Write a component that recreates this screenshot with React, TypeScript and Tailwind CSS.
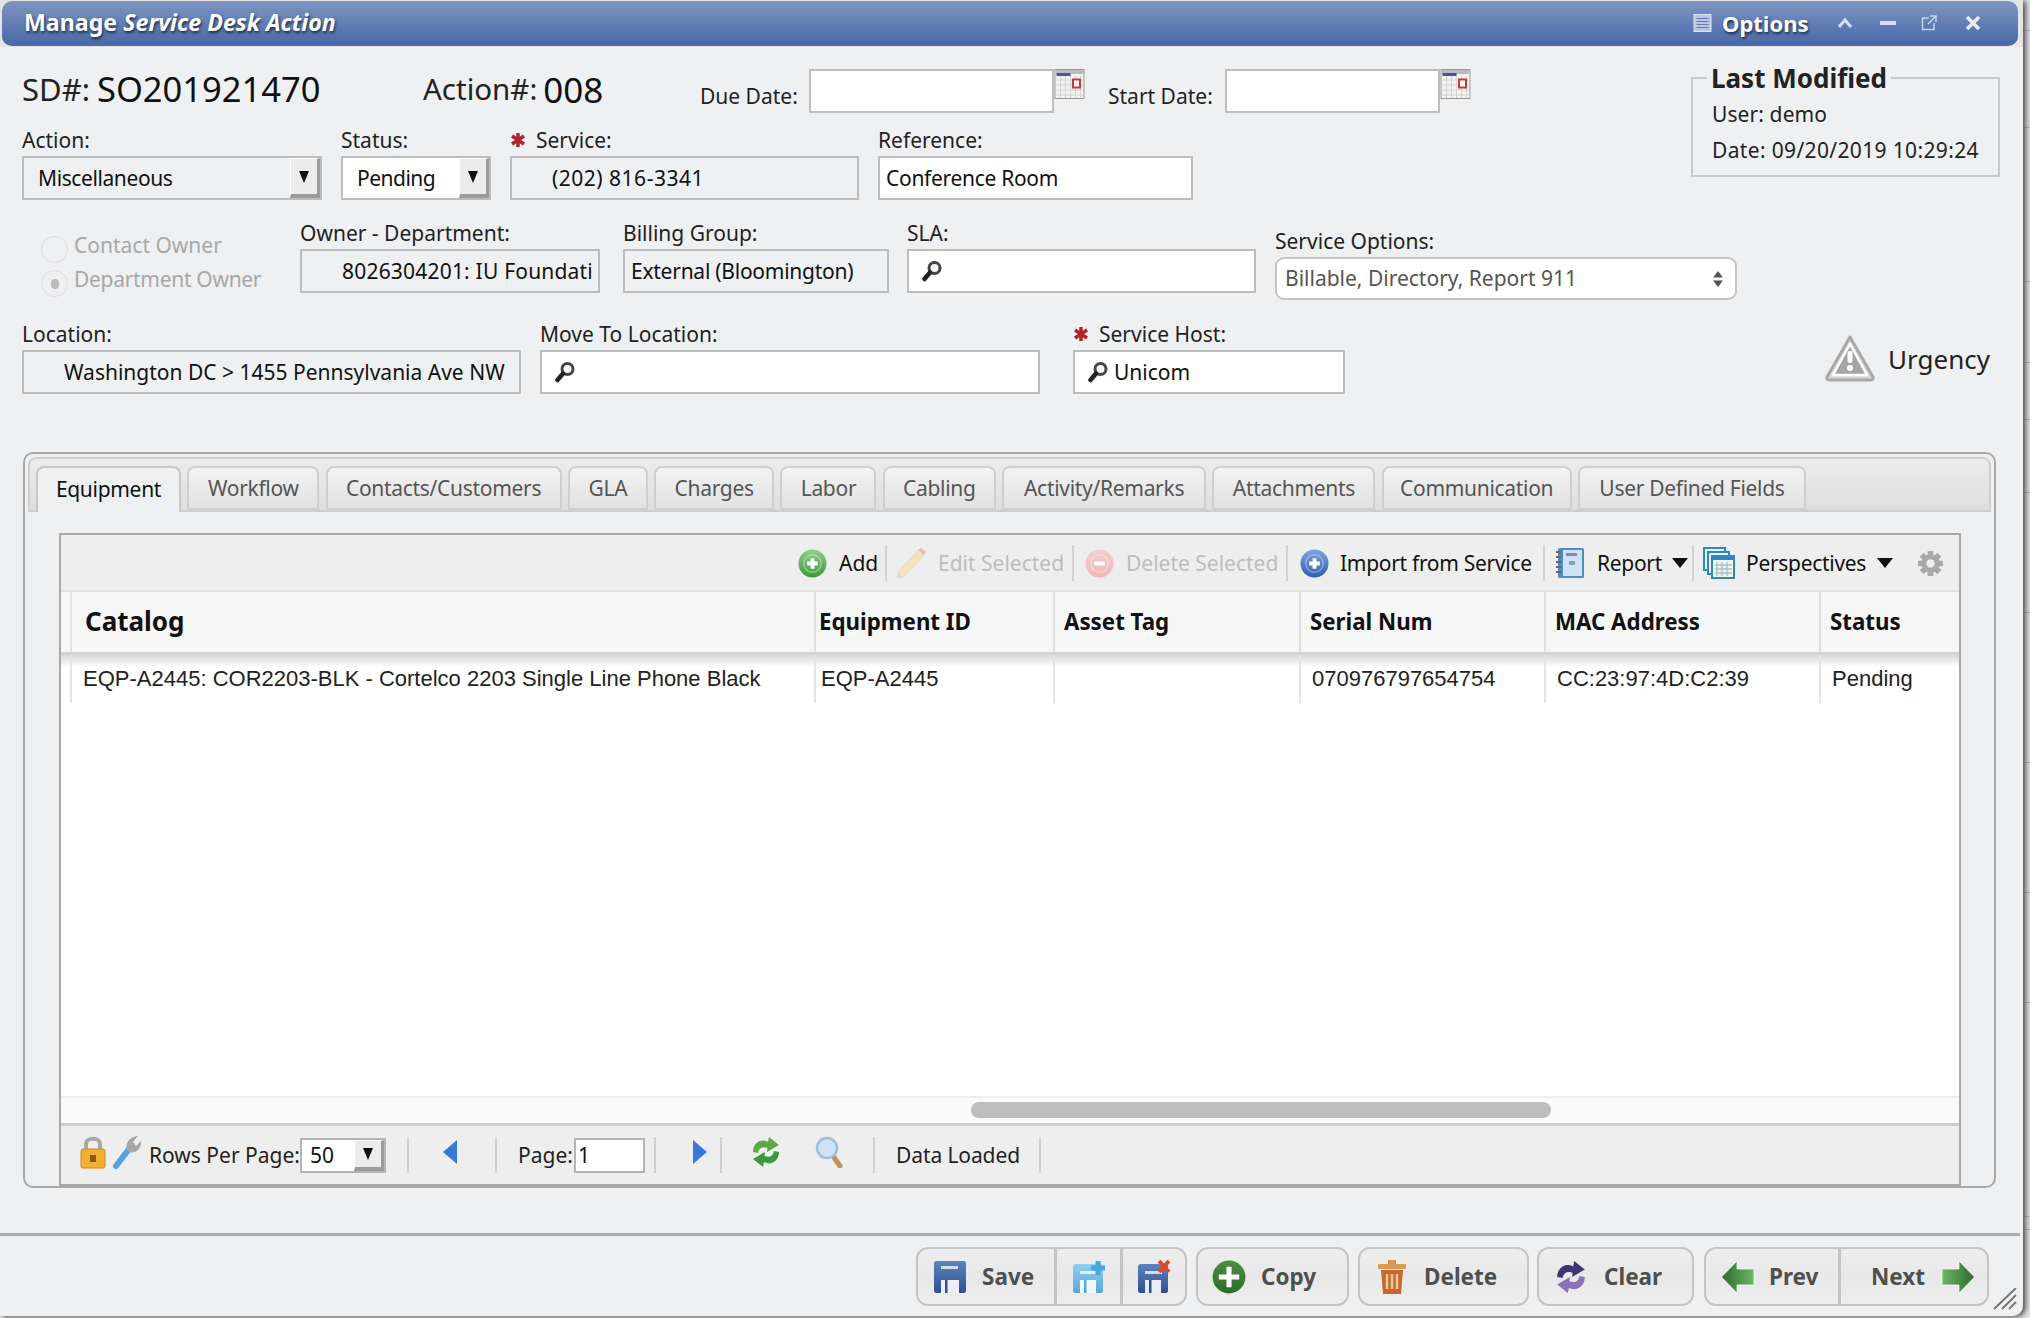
import React from "react";

const Tri = ({ className = "" }: { className?: string }) => (
  <svg viewBox="0 0 16 10" className={className}><path d="M0 0H16L8 10Z" fill="#111" /></svg>
);

const Mag = () => (
  <svg viewBox="0 0 22 22" className="w-[22px] h-[22px] shrink-0">
    <circle cx="13.5" cy="8" r="5.5" fill="#f4f4f4" stroke="#444" strokeWidth="3" />
    <path d="M9 12.5L3.5 19" stroke="#222" strokeWidth="4.5" strokeLinecap="round" />
  </svg>
);

const Cal = () => (
  <svg viewBox="0 0 30 30" className="w-[31px] h-[30px] shrink-0">
    <rect x="0.5" y="0.5" width="29" height="29" fill="#f2f2f2" stroke="#999" />
    <rect x="1" y="1" width="28" height="4" fill="#bbb" />
    <rect x="2" y="4" width="14" height="3" fill="#4a4fb0" />
    <path d="M1 11H29M1 16H29M1 21H29M1 26H29M6 7V29M11 7V29M16 7V29M21 7V29M26 7V29" stroke="#d4d4d4" strokeWidth="1" />
    <rect x="18.5" y="10.5" width="7" height="8" fill="#fff" stroke="#c63a3a" strokeWidth="2" />
  </svg>
);

const Star = () => (
  <svg viewBox="0 0 16 16" className="w-[16px] h-[16px] shrink-0">
    <path d="M8 1V15M2 4L14 12M14 4L2 12" stroke="#b3222a" strokeWidth="3.4" />
  </svg>
);

const Round = ({ id, from, to, sign, size = 29, opacity = 1, ring = true }: { id: string; from: string; to: string; sign: "plus" | "minus"; size?: number; opacity?: number; ring?: boolean }) => (
  <svg viewBox="0 0 30 30" className="shrink-0" style={{ width: size, height: size, opacity }}>
    <defs>
      <linearGradient id={id} x1="0" y1="0" x2="0" y2="1">
        <stop offset="0" stopColor={from} />
        <stop offset="1" stopColor={to} />
      </linearGradient>
    </defs>
    <circle cx="15" cy="15" r="14.5" fill={`url(#${id})`} />
    {ring && <circle cx="15" cy="15" r="9" fill="none" stroke="#fff" strokeOpacity="0.35" strokeWidth="1.5" />}
    {sign === "plus" ? (
      ring ? <path d="M15 9.5V20.5M9.5 15H20.5" stroke="#fff" strokeWidth="4" /> : <path d="M15 6V24M6 15H24" stroke="#fff" strokeWidth="4.5" />
    ) : (
      <path d="M9.5 15H20.5" stroke="#fff" strokeWidth="4" />
    )}
  </svg>
);

const Pencil = () => (
  <svg viewBox="0 0 30 32" className="w-[30px] h-[32px] shrink-0">
    <path d="M2 25L22 3L28 8L8 30L1 31Z" fill="#f3e2bd" stroke="#e8dcc4" />
    <path d="M22 3L25 0.5L30 5L28 8Z" fill="#eeb9c4" />
    <path d="M1 31L2 25L8 30Z" fill="#ddd" />
  </svg>
);

const Notebook = () => (
  <svg viewBox="0 0 30 32" className="w-[30px] h-[32px] shrink-0">
    <rect x="3" y="1" width="26" height="30" rx="1.5" fill="#4f8cc0" />
    <rect x="8" y="3" width="19" height="26" fill="#cfe3f4" />
    <rect x="11" y="6" width="11" height="3" fill="#6d93bc" />
    <rect x="14" y="14" width="6" height="4" fill="#8aa0b6" />
    <path d="M1 5H6M1 10H6M1 15H6M1 20H6M1 25H6" stroke="#666" strokeWidth="2" />
  </svg>
);

const Stack = () => (
  <svg viewBox="0 0 32 32" className="w-[32px] h-[32px] shrink-0">
    <rect x="1" y="1" width="21" height="22" fill="#e8f3fb" stroke="#2f86bd" strokeWidth="2" />
    <rect x="5" y="5" width="21" height="22" fill="#e8f3fb" stroke="#2f86bd" strokeWidth="2" />
    <rect x="9" y="9" width="22" height="22" fill="#f6f3e3" stroke="#2f86bd" strokeWidth="2" />
    <rect x="9" y="9" width="22" height="4" fill="#2f86bd" />
    <path d="M14 15V29M19 15V29M24 15V29M12 18H29M12 22H29M12 26H29" stroke="#9fc2dc" strokeWidth="1.3" />
  </svg>
);

const Gear = () => (
  <svg viewBox="0 0 26 26" className="w-[27px] h-[27px] shrink-0">
    <path d="M13 1V25M1 13H25M4.500 4.500L21.500 21.500M21.500 4.500L4.500 21.500" stroke="#a9a9a9" strokeWidth="5.5" />
    <circle cx="13" cy="13" r="9" fill="#a9a9a9" />
    <circle cx="13" cy="13" r="4" fill="#eee" />
  </svg>
);

const Sep = () => <div className="w-[2px] h-[36px] bg-[#d2d2d2] shrink-0" />;
const FootSep = () => <div className="w-[2px] h-[36px] bg-[#d0d0d0] shrink-0" />;

const Floppy = ({ id, from, to, badge }: { id: string; from: string; to: string; badge?: "plus" | "x" }) => (
  <svg viewBox="0 0 34 34" className="w-[34px] h-[34px] shrink-0">
    <defs>
      <linearGradient id={id} x1="0" y1="0" x2="0" y2="1">
        <stop offset="0" stopColor={from} />
        <stop offset="1" stopColor={to} />
      </linearGradient>
    </defs>
    <rect x="1" y={badge ? 4 : 1} width={badge ? 30 : 32} height={badge ? 29 : 32} rx="2.5" fill={`url(#${id})`} />
    <rect x="8" y={badge ? 11 : 6} width="17" height="3" fill="#fff" fillOpacity="0.75" />
    <rect x="8" y="20" width={badge ? 16 : 18} height="13" fill="#fff" fillOpacity="0.9" />
    <rect x="12" y="20" width="2.5" height="13" fill={to} />
    {badge === "plus" && <path d="M26 1V15M19 8H33" stroke="#45a7db" strokeWidth="5" />}
    {badge === "x" && <path d="M22 1L32 12M32 1L22 12" stroke="#d94b2c" strokeWidth="4" />}
  </svg>
);

const Arrow = ({ id, dir }: { id: string; dir: "l" | "r" }) => (
  <svg viewBox="0 0 34 34" className="w-[34px] h-[34px] shrink-0">
    <defs>
      <linearGradient id={id} x1={dir === "l" ? "0" : "1"} y1="0" x2={dir === "l" ? "1" : "0"} y2="0">
        <stop offset="0" stopColor="#2f6a2b" />
        <stop offset="1" stopColor="#6cb965" />
      </linearGradient>
    </defs>
    <path d={dir === "l" ? "M0.5 17L16 1V9H33V25H16V33Z" : "M33.5 17L18 1V9H1V25H18V33Z"} fill={`url(#${id})`} stroke="#fff" strokeWidth="0.7" />
  </svg>
);

const Refresh = ({ c1, c2, w, h, className = "" }: { c1: string; c2: string; w: string; h: string; className?: string }) => (
  <svg viewBox="0 0 32 32" className={`shrink-0 ${className}`} style={{ width: w, height: h }}>
    <path d="M3 16C3 7 11 2 18 6L19 1L29 9L17 16L17.500 12C12 10 9 12 8 17Z" fill={c1} />
    <path d="M29 16C29 25 21 30 14 26L13 31L3 23L15 16L14.500 20C20 22 23 20 24 15Z" fill={c2} />
  </svg>
);

const Field = ({ label, star, w, children }: { label: string; star?: boolean; w: string; children: React.ReactNode }) => (
  <div className={`flex flex-col shrink-0 ${w}`}>
    <div className="h-[30px] pb-[2px] flex items-center gap-[10px] whitespace-nowrap text-[#222]">
      {star && <Star />}
      {label}
    </div>
    {children}
  </div>
);

const Box = ({ white, className = "", children }: { white?: boolean; className?: string; children?: React.ReactNode }) => (
  <div className={`h-[44px] border-2 border-[#bdbdbd] flex items-center overflow-hidden whitespace-nowrap text-[#111] ${white ? "bg-white" : "bg-[#eff0f2]"} ${className}`}>
    {children}
  </div>
);

const SelectBtn = () => (
  <div className="ml-auto w-[30px] h-full flex items-center justify-center bg-[#ececec] border-t border-l border-[#fff] border-r-[3px] border-b-[4px] border-r-[#9a9a9a] border-b-[#9a9a9a]">
    <svg viewBox="0 0 10 12" className="w-[10px] h-[12px]"><path d="M0 0H10L5 12Z" fill="#111" /></svg>
  </div>
);

const Tab = ({ label, w, active }: { label: string; w: string; active?: boolean }) => (
  <div className={`h-[44px] shrink-0 rounded-t-[8px] border-2 flex items-center justify-center whitespace-nowrap tracking-[-0.3px] ${w} ${active ? "bg-[#eff0f2] border-[#c8c8c8] border-b-0 h-[46px] pb-[2px] -mb-[2px] text-[#111]" : "bg-gradient-to-b from-[#f3f3f3] via-[#eaeaea] to-[#e2e2e2] border-[#cfcfcf] text-[#555]"}`}>
    {label}
  </div>
);

const Tool = ({ icon, label, w, dim, gap = "ml-[12px]", tight }: { icon: React.ReactNode; label: string; w: string; dim?: boolean; gap?: string; tight?: boolean }) => (
  <div className="flex items-center shrink-0">
    {icon}
    <div className={`${gap} ${w} whitespace-nowrap ${tight ? "tracking-[-0.3px]" : ""} ${dim ? "text-[#bdbdbd]" : "text-[#111]"}`}>{label}</div>
  </div>
);

const cols = ["w-[744px]", "w-[239px]", "w-[246px]", "w-[245px]", "w-[275px]", "w-[140px]"];
const heads = ["Catalog", "Equipment ID", "Asset Tag", "Serial Num", "MAC Address", "Status"];
const cells = ["EQP-A2445: COR2203-BLK - Cortelco 2203 Single Line Phone Black", "EQP-A2445", "", "070976797654754", "CC:23:97:4D:C2:39", "Pending"];

const BtnText = ({ children, className = "" }: { children: React.ReactNode; className?: string }) => (
  <span className={`whitespace-nowrap font-bold text-[#4f4f4f] pt-[2px] ${className}`}>{children}</span>
);

const btnBg = "h-[59px] rounded-[12px] border-2 border-[#c4c4c4] bg-gradient-to-b from-[#eeeeee] via-[#e8e8e8] to-[#eeeeee] flex items-center shrink-0";

const stripRows = ["h-[31px]", "h-[97px]", "h-[154px]", "h-[81px]", "h-[57px]", "h-[73px]", "h-[120px]", "h-[150px]", "h-[130px]", "h-[110px]", "h-[214px]", "h-[13px]"];

export default function App() {
  return (
    <div className="w-[2030px] h-[1318px] overflow-hidden flex bg-[#dcdcdc] font-['Noto_Sans','Open_Sans',sans-serif] text-[21px] leading-none">
      <div className="relative z-10 w-[2023px] h-[1316px] shrink-0 bg-[#eff0f2] rounded-br-[10px] shadow-[3px_1px_5px_#555] flex flex-col">
        {/* title bar */}
        <div className="h-[47px] shrink-0 pl-[2px] pr-[5px] pt-[1px] bg-[#e4e4e4]">
          <div className="h-[45px] rounded-[10px] bg-gradient-to-b from-[#7e95c2] to-[#4869a7] flex items-center text-white font-bold [text-shadow:1px_2px_3px_#1c2b4a] border-b border-[#4a6aa5]">
            <div className="ml-[22px] text-[23.2px] whitespace-nowrap w-[1669px]">Manage <i>Service Desk Action</i></div>
            <svg viewBox="0 0 18 18" className="w-[19px] h-[18px] shrink-0"><rect x="0.5" y="0.5" width="17" height="17" fill="#b9c7e0" stroke="#dde5f2" /><path d="M3 4.500H15M3 7.500H15M3 10.500H15M3 13.500H15" stroke="#5f7bb0" /></svg>
            <div className="ml-[10px] w-[115px] text-[22px] whitespace-nowrap">Options</div>
            <svg viewBox="0 0 16 16" className="w-[16px] h-[16px] shrink-0"><path d="M2 12L8 5L14 12" fill="none" stroke="#d7dfee" strokeWidth="3" /></svg>
            <div className="ml-[27px] w-[16px] h-[4px] bg-[#d7dfee] shrink-0" />
            <svg viewBox="0 0 16 16" className="ml-[25px] w-[16px] h-[16px] shrink-0"><path d="M8 3H1.500V14.500H13V8M9 1H15V7M15 1L7 9" fill="none" stroke="#c9d4e8" strokeWidth="1.500" /></svg>
            <svg viewBox="0 0 16 16" className="ml-[28px] w-[16px] h-[16px] shrink-0"><path d="M2 2L14 14M14 2L2 14" stroke="#e6ebf5" strokeWidth="3.6" /></svg>
          </div>
        </div>

        {/* form */}
        <div className="pl-[22px] shrink-0">
          <div className="flex items-start">
            <div className="w-[1669px] shrink-0">
              <div className="flex items-start mt-[22px] h-[44px]">
                <div className="w-[401px] shrink-0 flex items-center h-[40px] whitespace-nowrap text-[#222]">
                  <span className="text-[31px]">SD#:</span>
                  <span className="text-[34.5px] text-[#111] ml-[7px]">SO201921470</span>
                </div>
                <div className="w-[277px] shrink-0 flex items-center h-[40px] whitespace-nowrap text-[#222]">
                  <span className="text-[29.5px]">Action#:</span>
                  <span className="text-[35px] text-[#111] ml-[6px]">008</span>
                </div>
                <div className="w-[109px] shrink-0 h-[44px] pt-[17px] whitespace-nowrap text-[#222]">Due Date:</div>
                <Box white className="w-[245px] shrink-0" />
                <Cal />
                <div className="ml-[23px] w-[117px] shrink-0 h-[44px] pt-[17px] whitespace-nowrap text-[#222]">Start Date:</div>
                <Box white className="w-[215px] shrink-0" />
                <Cal />
              </div>
              <div className="flex items-start mt-[13px]">
                <Field label="Action:" w="w-[300px] mr-[19px]">
                  <Box className="pl-[14px]"><span className="tracking-[-0.4px] pt-[1px]">Miscellaneous</span><SelectBtn /></Box>
                </Field>
                <Field label="Status:" w="w-[150px] mr-[19px]">
                  <Box white className="pl-[14px]"><span className="tracking-[-0.5px] pt-[1px]">Pending</span><SelectBtn /></Box>
                </Field>
                <Field label="Service:" star w="w-[349px] mr-[19px]">
                  <Box className="pl-[40px]"><span className="tracking-[0.5px] pt-[1px]">(202) 816-3341</span></Box>
                </Field>
                <Field label="Reference:" w="w-[315px]">
                  <Box white className="pl-[6px]"><span className="tracking-[-0.3px] pt-[1px]">Conference Room</span></Box>
                </Field>
              </div>
            </div>
            <fieldset className="w-[309px] h-[112px] mt-[18px] border-2 border-[#c8c8c8] pl-[19px] shrink-0 text-[#222]">
              <legend className="text-[26px] font-bold text-[#222] px-[4px] -ml-[5px] leading-[26px] whitespace-nowrap">Last Modified</legend>
              <div className="mt-[13px] whitespace-nowrap tracking-[0.1px]">User: demo</div>
              <div className="mt-[15px] whitespace-nowrap tracking-[0.35px]">Date: 09/20/2019 10:29:24</div>
            </fieldset>
          </div>

          <div className="flex items-start mt-[19px] h-[81px]">
            <div className="w-[278px] shrink-0 pl-[19px] pt-[17px] text-[#a8a8a8]">
              <div className="flex items-center h-[27px] mb-[7px]">
                <div className="w-[27px] h-[27px] rounded-full border border-[#dedede] shrink-0" />
                <div className="ml-[6px] -mt-[9px] whitespace-nowrap">Contact Owner</div>
              </div>
              <div className="flex items-center h-[27px]">
                <div className="w-[27px] h-[27px] rounded-full border border-[#dedede] shrink-0 flex items-center justify-center">
                  <div className="w-[8px] h-[10px] rounded-full bg-[#bbb]" />
                </div>
                <div className="ml-[6px] -mt-[9px] whitespace-nowrap tracking-[-0.3px]">Department Owner</div>
              </div>
            </div>
            <Field label="Owner - Department:" w="w-[300px] mr-[23px]">
              <Box className="pl-[40px] pr-[4px]"><span className="overflow-hidden tracking-[0.2px] pt-[1px]">8026304201: IU Foundation</span></Box>
            </Field>
            <Field label="Billing Group:" w="w-[266px] mr-[18px]">
              <Box className="pl-[6px]"><span className="tracking-[-0.25px] pt-[1px]">External (Bloomington)</span></Box>
            </Field>
            <Field label="SLA:" w="w-[349px] mr-[20px]">
              <Box white className="pl-[12px]"><Mag /></Box>
            </Field>
            <div className="w-[462px] -ml-[1px] shrink-0 pt-[8px]">
              <div className="h-[30px] pb-[2px] flex items-center whitespace-nowrap text-[#222]">Service Options:</div>
              <div className="h-[43px] rounded-[9px] border-2 border-[#c4c4c4] bg-white flex items-center pl-[8px] pr-[12px] text-[#555] whitespace-nowrap">
                <span>Billable, Directory, Report 911</span>
                <svg viewBox="0 0 10 18" className="ml-auto w-[10px] h-[18px]"><path d="M5 1L10 7.500H0ZM5 17L0 10.500H10Z" fill="#555" /></svg>
              </div>
            </div>
          </div>

          <div className="flex items-start mt-[20px]">
            <Field label="Location:" w="w-[499px] mr-[19px]">
              <Box className="pl-[40px]"><span className="pt-[1px]">{"Washington DC > 1455 Pennsylvania Ave NW"}</span></Box>
            </Field>
            <Field label="Move To Location:" w="w-[500px] mr-[33px]">
              <Box white className="pl-[12px]"><Mag /></Box>
            </Field>
            <Field label="Service Host:" star w="w-[272px] mr-[479px]">
              <Box white className="pl-[12px]"><Mag /><span className="ml-[5px] pt-[1px]">Unicom</span></Box>
            </Field>
            <div className="flex items-center mt-[14px] shrink-0">
              <svg viewBox="0 0 52 48" className="w-[52px] h-[48px] shrink-0">
                <path d="M26 3L49 43Q50 46 46 46H6Q2 46 3 43Z" fill="#d9d9d9" stroke="#a8a8a8" strokeWidth="3" strokeLinejoin="round" />
                <path d="M26 10L43 41H9Z" fill="#a5a5a5" stroke="#fff" strokeWidth="2.500" strokeLinejoin="round" />
                <rect x="23.500" y="17" width="5" height="12" rx="2" fill="#fff" />
                <circle cx="26" cy="34" r="3" fill="#fff" />
              </svg>
              <div className="ml-[12px] pt-[1px] text-[26px] text-[#222] whitespace-nowrap">Urgency</div>
            </div>
          </div>
        </div>

        {/* tabs panel */}
        <div className="mt-[58px] ml-[23px] w-[1973px] h-[736px] shrink-0 border-2 border-[#a9a9a9] rounded-[10px] px-[3px] pt-[3px] flex flex-col">
          <div className="h-[55px] shrink-0 rounded-t-[8px] border-2 border-[#cfcfcf] bg-gradient-to-b from-[#ececec] to-[#dedede] flex items-end pl-[6px] gap-[6.3px]">
            <Tab active label="Equipment" w="w-[145px]" />
            <Tab label="Workflow" w="w-[132px]" />
            <Tab label="Contacts/Customers" w="w-[236px]" />
            <Tab label="GLA" w="w-[80px]" />
            <Tab label="Charges" w="w-[120px]" />
            <Tab label="Labor" w="w-[96px]" />
            <Tab label="Cabling" w="w-[113px]" />
            <Tab label="Activity/Remarks" w="w-[204px]" />
            <Tab label="Attachments" w="w-[163px]" />
            <Tab label="Communication" w="w-[190px]" />
            <Tab label="User Defined Fields" w="w-[228px]" />
          </div>
          <div className="mt-[21px] ml-[31px] w-[1902px] h-[653px] shrink-0 border-2 border-[#a9a9a9] bg-white flex flex-col">
            <div className="h-[57px] shrink-0 bg-[#eeeeee] border-b-2 border-[#e2e2e2] flex items-center justify-end pr-[15px] pt-[1px]">
              <Tool icon={<Round id="g1" from="#8fd08a" to="#3f9a3a" sign="plus" />} label="Add" w="w-[46px]" />
              <Sep />
              <div className="ml-[9px]" />
              <Tool dim icon={<Pencil />} label="Edit Selected" w="w-[134px]" />
              <Sep />
              <div className="ml-[11px]" />
              <Tool dim icon={<Round id="g2" from="#f5cfcf" to="#eeb7b7" sign="minus" />} label="Delete Selected" w="w-[160px]" />
              <Sep />
              <div className="ml-[12px]" />
              <Tool tight icon={<Round id="g3" from="#7ea4de" to="#2f5fb0" sign="plus" />} label="Import from Service" w="w-[203px]" gap="ml-[11px]" />
              <Sep />
              <div className="ml-[10px]" />
              <Tool tight icon={<Notebook />} label="Report" w="w-[75px]" />
              <Tri className="w-[16px] h-[10px] shrink-0" />
              <div className="ml-[4px]" />
              <Sep />
              <div className="ml-[9px]" />
              <Tool tight icon={<Stack />} label="Perspectives" w="w-[131px]" gap="ml-[11px]" />
              <Tri className="w-[16px] h-[10px] shrink-0" />
              <div className="ml-[24px]" />
              <Gear />
            </div>
            <div className="h-[63px] shrink-0 flex bg-[#f6f6f6] border-b-[3px] border-[#d4d4d4] pl-[9px] font-bold text-[#111] text-[22.3px]">
              {heads.map((h, i) => (
                <div key={h} className={`${cols[i]} shrink-0 flex items-center ${i === 0 ? "border-l-2 border-[#e4e4e4] pl-[13px] text-[26px] -mt-[3px]" : "border-l-2 border-[#dedede] " + (i === 1 ? "pl-[3px]" : "pl-[9px]")} whitespace-nowrap`}>{h}</div>
              ))}
            </div>
            <div className="h-[48px] shrink-0 flex pl-[9px] bg-gradient-to-b from-[#d8d8d8] from-0% via-[#ffffff] via-25% to-[#ffffff] font-['Liberation_Sans',sans-serif] text-[22px] text-[#222]">
              {cells.map((c, i) => (
                <div key={i} className={`${cols[i]} shrink-0 flex items-center border-l-2 border-[#e4e4e4] whitespace-nowrap ${i === 0 ? "pl-[11px]" : i === 1 ? "pl-[5px]" : "pl-[11px]"}`}>{c}</div>
              ))}
            </div>
            <div className="flex-1 bg-white" />
            <div className="h-[27px] shrink-0 bg-[#fafafa] border-t-2 border-[#eeeeee] pt-[4px] pl-[910px]">
              <div className="w-[580px] h-[16px] rounded-full bg-[#bdbdbd]" />
            </div>
            <div className="h-[61px] shrink-0 bg-[#eeeeee] border-t-[3px] border-[#cccccc] flex items-center pl-[19px] text-[#222]">
              <svg viewBox="0 0 26 34" className="w-[26px] h-[34px] shrink-0 -mt-[6px]">
                <path d="M6 15V9C6 2 20 2 20 9V15" fill="none" stroke="#a9a9a9" strokeWidth="4" />
                <rect x="1" y="14" width="24" height="19" rx="2" fill="#f0b132" stroke="#cc8a1d" />
                <rect x="10" y="20" width="6" height="7" fill="#8a5a12" />
              </svg>
              <svg viewBox="0 0 30 36" className="ml-[6px] w-[30px] h-[36px] shrink-0 -mt-[6px]">
                <path d="M4 32L17 15" stroke="#5b9fdc" strokeWidth="6" strokeLinecap="round" />
                <path d="M15 16C13 9 17 3 26 2L21 8L24 12L29 7C30 14 24 20 17 18Z" fill="#a7a7a7" />
              </svg>
              <div className="ml-[7px] w-[151px] whitespace-nowrap">Rows Per Page:</div>
              <div className="w-[86px] h-[35px] shrink-0 border-2 border-[#b5b5b5] bg-white flex items-center pl-[8px] text-[#111]">50<SelectBtn /></div>
              <div className="ml-[21px]" /><FootSep />
              <div className="ml-[34px]" />
              <svg viewBox="0 0 14 24" className="w-[14px] h-[24px] shrink-0 -mt-[6px]"><path d="M14 0L0 12L14 24Z" fill="#3a78d8" /></svg>
              <div className="ml-[38px]" /><FootSep />
              <div className="ml-[21px] w-[56px] whitespace-nowrap">Page:</div>
              <div className="w-[71px] h-[35px] shrink-0 border-2 border-[#b5b5b5] bg-white flex items-center pl-[2px] text-[#111]">1</div>
              <div className="ml-[9px]" /><FootSep />
              <div className="ml-[37px]" />
              <svg viewBox="0 0 14 24" className="w-[14px] h-[24px] shrink-0 -mt-[6px]"><path d="M0 0L14 12L0 24Z" fill="#3a78d8" /></svg>
              <div className="ml-[13px]" /><FootSep />
              <div className="ml-[28px]" />
              <Refresh c1="#5aa846" c2="#3c9a3a" w="32px" h="32px" className="-mt-[6px]" />
              <svg viewBox="0 0 28 32" className="ml-[33px] w-[28px] h-[32px] shrink-0 -mt-[6px]">
                <path d="M18 20L25 30" stroke="#c6905a" strokeWidth="5" strokeLinecap="round" />
                <circle cx="12" cy="12" r="10" fill="#cfe3f6" stroke="#9dbfdf" strokeWidth="2.500" />
              </svg>
              <div className="ml-[30px]" /><FootSep />
              <div className="ml-[21px] w-[143px] whitespace-nowrap tracking-[-0.1px]">Data Loaded</div>
              <FootSep />
            </div>
          </div>
        </div>

        {/* bottom bar */}
        <div className="mt-[45px] mr-[3px] flex-1 border-t-[3px] border-[#adadad] pt-[11px] pl-[916px] flex items-start text-[22.5px]">
          <div className={`${btnBg} w-[271px]`}>
            <div className="w-[136px] h-full flex items-center pl-[15px]">
              <Floppy id="s1" from="#5d83bd" to="#324f90" />
              <BtnText className="ml-[15px]">Save</BtnText>
            </div>
            <div className="w-[66px] h-full border-l-[3px] border-[#c4c4c4] flex items-center justify-center">
              <Floppy id="s2" from="#8fd0f0" to="#5aa6d8" badge="plus" />
            </div>
            <div className="flex-1 h-full border-l-[3px] border-[#c4c4c4] flex items-center justify-center">
              <Floppy id="s3" from="#5d83bd" to="#324f90" badge="x" />
            </div>
          </div>
          <div className={`${btnBg} w-[153px] ml-[9px] pl-[14px]`}>
            <Round id="c1" from="#4c8f45" to="#2f6a2b" sign="plus" size={34} ring={false} />
            <BtnText className="ml-[15px]">Copy</BtnText>
          </div>
          <div className={`${btnBg} w-[171px] ml-[9px] pl-[17px]`}>
            <svg viewBox="0 0 30 36" className="w-[30px] h-[36px] shrink-0">
              <rect x="11" y="1" width="8" height="4" fill="#d9954e" />
              <rect x="1" y="5" width="28" height="5" rx="1" fill="#dc9a55" />
              <path d="M4 11H26L24 35H6Z" fill="#c7672e" />
              <path d="M10 15V30M15 15V30M20 15V30" stroke="#f2c99e" strokeWidth="2.500" />
            </svg>
            <BtnText className="ml-[17px]">Delete</BtnText>
          </div>
          <div className={`${btnBg} w-[157px] ml-[8px] pl-[15px]`}>
            <Refresh c1="#3d3574" c2="#8a72b8" w="34px" h="36px" />
            <BtnText className="ml-[16px]">Clear</BtnText>
          </div>
          <div className={`${btnBg} w-[285px] ml-[10px]`}>
            <div className="w-[132px] h-full flex items-center pl-[15px]">
              <Arrow id="a1" dir="l" />
              <BtnText className="ml-[14px]">Prev</BtnText>
            </div>
            <div className="flex-1 h-full border-l-[3px] border-[#c4c4c4] flex items-center pl-[30px]">
              <BtnText>Next</BtnText>
              <div className="ml-[16px]"><Arrow id="a2" dir="r" /></div>
            </div>
          </div>
        </div>

        <svg viewBox="0 0 24 22" className="absolute left-[1993px] top-[1288px] w-[24px] h-[22px]">
          <path d="M1 21L23 0M9 21L23 7M16 21L23 14" stroke="#777" strokeWidth="2" />
        </svg>
      </div>
      <div className="flex-1 flex flex-col bg-[#e2e2e2]">
        {stripRows.map((h, i) => (
          <div key={i} className={`${h} shrink-0 border-b border-[#b5b5b5]`} />
        ))}
      </div>
    </div>
  );
}
